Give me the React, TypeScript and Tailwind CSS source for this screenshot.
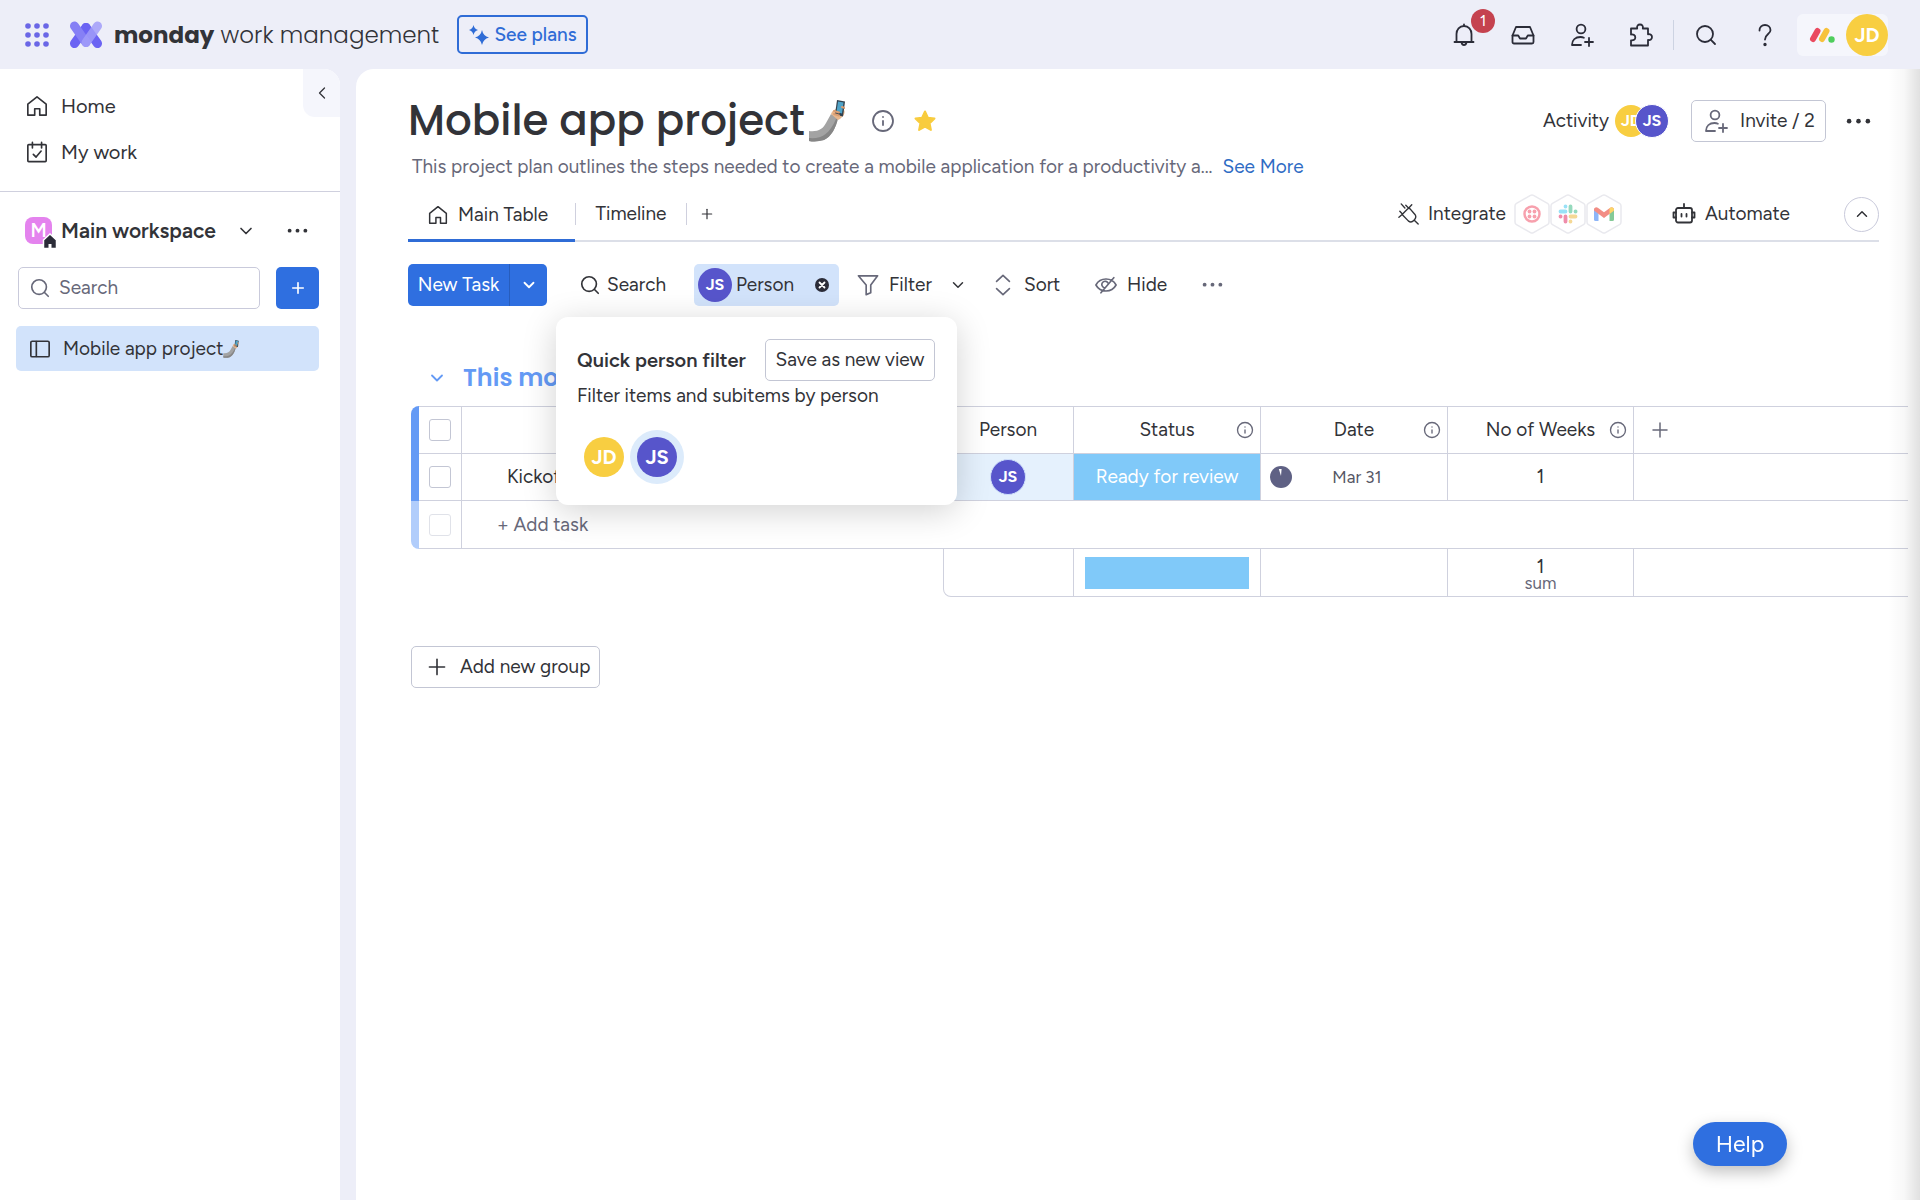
import React from "react";
import {
  ChevronDown,
  ChevronLeft,
  ChevronUp,
  Info,
  Plus,
  Search,
} from "lucide-react";

interface IconProps {
  children: React.ReactNode;
  className?: string;
}

const Icon: React.FC<IconProps> = ({ children, className = "size-6" }) => (
  <svg
    viewBox="0 0 24 24"
    fill="none"
    stroke="currentColor"
    strokeWidth="1.8"
    strokeLinecap="round"
    strokeLinejoin="round"
    aria-hidden="true"
    className={`shrink-0 ${className}`}
  >
    {children}
  </svg>
);

const HomeIcon = ({ className }: { className?: string }) => (
  <Icon className={className}>
    <path d="M2 10 12 2l10 8v12h-7v-7H9.500v7H2Z" />
  </Icon>
);

const MyWorkIcon = () => (
  <Icon className="size-[22px]">
    <rect x="2" y="4" width="20" height="18.500" rx="1" />
    <path d="M7 1.500v6M17 1.500v6M8 14.500l3 3 5.500-6.500" />
  </Icon>
);

const BoardIcon = () => (
  <Icon className="size-[22px]">
    <rect x="2" y="3.500" width="20" height="17" rx="1.500" />
    <path d="M8 4v16" />
  </Icon>
);

const PersonPlusIcon = ({ className }: { className?: string }) => (
  <Icon className={className}>
    <circle cx="11" cy="6" r="4.400" />
    <path d="M11 22H2c0-5 3.500-8 8.500-8 1.300 0 2.400.2 3.400.7M19 15v8M15 19h8" />
  </Icon>
);

const BellIcon = () => (
  <Icon>
    <path d="M12 1.500V3M4.500 19V11c0-4.500 3-8 7.500-8s7.500 3.500 7.500 8v8M2.500 19h19M9.500 19.500c.4 1.600 1.200 2.500 2.500 2.500s2.100-.9 2.500-2.500" />
  </Icon>
);

const InboxIcon = () => (
  <Icon>
    <path d="M5 4h14l3.500 8.500V19a1.500 1.500 0 0 1-1.500 1.500H3A1.500 1.500 0 0 1 1.500 19v-6.500Z" />
    <path d="M1.500 12.500h5.700l1.800 3h6l1.800-3h5.700" />
  </Icon>
);

const PuzzleIcon = () => (
  <Icon>
    <path d="M2 5.500h6.200C7.600 3 9 1.500 11 1.500S14.400 3 13.800 5.500H19v5.800c2.400-.6 4 .8 4 2.800s-1.600 3.400-4 2.800v5.600H2v-5.200c2.600.4 4.300-1 4.300-2.900S4.600 11.100 2 11.500Z" />
  </Icon>
);

const IntegratePlugIcon = () => (
  <Icon className="size-[22px]">
    <path
      strokeWidth="1.500"
      d="m2 9 3 3.200M8.500 2.500 12 6M4.500 12.500 12 5l6.500 7.500a4.500 4.500 0 0 1-.3 5.500l-1 1.200a4.500 4.500 0 0 1-6 .3Zm-1-11.500 4 4.500M15 2l-3 3.200M1 15.500l3.500-3M17.500 18.500 22 23"
    />
  </Icon>
);

const RobotIcon = () => (
  <Icon className="size-6">
    <rect x="4" y="6" width="16" height="14.500" rx="2" />
    <path d="M12 2v4M4 10.500H1.500v5H4M20 10.500h2.500v5H20M9.500 12v2.500M14.500 12v2.500" />
  </Icon>
);

const Dots = ({ className = "w-6" }: { className?: string }) => (
  <svg viewBox="0 0 24 6" fill="currentColor" aria-hidden="true" className={`shrink-0 ${className}`}>
    <circle cx="3" cy="3" r="2.200" />
    <circle cx="12" cy="3" r="2.200" />
    <circle cx="21" cy="3" r="2.200" />
  </svg>
);

const SelfieArm = ({ className }: { className?: string }) => (
  <svg viewBox="0 0 36 42" role="img" aria-label="selfie" className={`shrink-0 ${className}`}>
    <path d="M0 31c9 1 14-2 17-8l5-9 7 4c-2 10-7 19-14 22-5 1.500-10 2-15 1Z" fill="#a3a3a3" />
    <path d="M0 38c12 1 20-3 27-19l2-1c-2 10-7 19-14 22-5 1.500-10 2-15 1Z" fill="#868686" />
    <path d="M22 14c1-3 3-4 5-5l6-1c2 1 3 3 2.500 5-.5 3-3 4-4.500 6l-2 1Z" fill="#e8b68c" />
    <path d="m28 0 8 1.500-2 15-8-2Z" fill="#31414e" />
    <path d="m29 1.500 5.500 1-1.500 11-5.500-1.500Z" fill="#4fa3c7" />
    <path d="M25 11l5 1.500M25 14l5 1.500M33 7l3 1" stroke="#d99d72" strokeWidth="2" strokeLinecap="round" />
  </svg>
);

const WorkLogo = () => (
  <svg viewBox="0 0 32 28" aria-hidden="true" className="h-7 w-8 shrink-0">
    <g strokeWidth="9" strokeLinecap="round">
      <path d="M4.500 22.500 16 6.500" stroke="#6b63f3" />
      <path d="M16 6.500l11.500 16" stroke="#6b63f3" />
      <path d="M4.500 5l11.500 16.500" stroke="#8680f5" />
      <path d="M16 21.500 27.500 5" stroke="#a29dfa" opacity=".85" />
    </g>
  </svg>
);

const MondayLogo = () => (
  <svg viewBox="0 0 26 16" aria-hidden="true" className="h-4 w-[26px] shrink-0">
    <path d="M4 12 8.500 4" stroke="#ea4a5f" strokeWidth="6" strokeLinecap="round" />
    <path d="M13 12 17.500 4" stroke="#f7c23c" strokeWidth="6" strokeLinecap="round" />
    <circle cx="22.500" cy="12.500" r="3.200" fill="#4fce5d" />
  </svg>
);

const Hexagon: React.FC<{ children: React.ReactNode }> = ({ children }) => (
  <svg viewBox="0 0 36 40" fill="none" aria-hidden="true" className="h-10 w-9">
    <path
      d="M16.500 1.400a3 3 0 0 1 3 0l14 8a3 3 0 0 1 1.500 2.600v16a3 3 0 0 1-1.500 2.600l-14 8a3 3 0 0 1-3 0l-14-8A3 3 0 0 1 1 28V12a3 3 0 0 1 1.500-2.600Z"
      fill="#fff"
      stroke="#e9e9ee"
      strokeWidth="1.500"
    />
    {children}
  </svg>
);

interface AvatarProps {
  initials: string;
  className: string;
}

const Avatar: React.FC<AvatarProps> = ({ initials, className }) => (
  <span
    className={`flex shrink-0 items-center justify-center rounded-full font-bold text-white ${
      initials === "JS" ? "bg-[#5755cb]" : "bg-[#f8ce41]"
    } ${className}`}
  >
    {initials}
  </span>
);

const TopBar = () => (
  <header className="flex h-[69px] shrink-0 items-center justify-between pr-8 pl-6">
    <div className="flex items-center">
      <button aria-label="Products" className="mr-[21px]">
        <svg viewBox="0 0 25 24" fill="#6a66e6" aria-hidden="true" className="h-6 w-[25px]">
          {[3, 12, 21].map((y) =>
            [4, 13, 22].map((x) => <circle key={`${x}-${y}`} cx={x} cy={y} r="2.800" />),
          )}
        </svg>
      </button>
      <WorkLogo />
      <p className="ml-3 w-[343px] font-['Poppins','Figtree','Inter',sans-serif] text-[23px] leading-9 font-light whitespace-nowrap">
        <span className="font-bold">monday</span> work management
      </p>
      <button className="flex h-[39px] w-[131px] items-center justify-center gap-1 rounded-[5px] border-2 border-[#2f6cd6] text-[19px] font-medium text-[#2f6cd6]">
        <svg viewBox="0 0 22 22" fill="currentColor" aria-hidden="true" className="size-[22px]">
          <path d="M14 6q1.200 6 7 7.500-5.800 1.500-7 7.500-1.200-6-7-7.500Q12.800 12 14 6Z" />
          <path d="M5.500 1q.8 4 4.500 5-3.700 1-4.500 5-.8-4-4.500-5 3.700-1 4.500-5Z" />
        </svg>
        See plans
      </button>
    </div>
    <div className="flex items-center text-[#2b2c38]">
      <div className="flex items-center gap-[35px]">
        <button aria-label="Notifications" className="relative">
          <BellIcon />
          <span className="absolute -top-3.5 left-[19px] flex size-6 items-center justify-center rounded-full bg-[#c5424f] text-base text-white">
            1
          </span>
        </button>
        <button aria-label="Inbox">
          <InboxIcon />
        </button>
        <button aria-label="Invite members">
          <PersonPlusIcon />
        </button>
        <button aria-label="Apps">
          <PuzzleIcon />
        </button>
      </div>
      <div className="ml-5 h-[30px] w-px bg-[#cdd3e2]" />
      <button aria-label="Search everything" className="ml-5">
        <Search className="size-6" strokeWidth={1.8} />
      </button>
      <button aria-label="Help center" className="ml-[35px]">
        <Icon>
          <path d="M6.500 7.500C6.500 4 9 2 12 2s5.500 2 5.500 5.200c0 3.800-5.500 4-5.500 9.300" />
          <circle cx="12" cy="21.500" r=".8" fill="currentColor" />
        </Icon>
      </button>
      <button aria-label="Account" className="ml-5 flex items-center rounded-md bg-[#f5f6fc] pl-3">
        <MondayLogo />
        <Avatar initials="JD" className="ml-[11px] size-[42px] text-xl" />
      </button>
    </div>
  </header>
);

const Sidebar = () => (
  <aside className="relative w-[340px] shrink-0 rounded-tr-2xl bg-white">
    <button
      aria-label="Collapse sidebar"
      className="absolute top-0 right-0 flex h-12 w-[37px] items-center justify-center rounded-tr-2xl rounded-bl-xl bg-[#f5f6fc]"
    >
      <ChevronLeft className="size-5" strokeWidth={1.5} />
    </button>
    <nav className="flex h-[123px] flex-col gap-4 border-b border-[#cfd0de] pt-[22px] pl-[26px] text-xl">
      <a href="#home" className="flex h-[30px] items-center gap-[13px]">
        <HomeIcon className="size-[22px]" />
        Home
      </a>
      <a href="#work" className="flex h-[30px] items-center gap-[13px]">
        <MyWorkIcon />
        My work
      </a>
    </nav>
    <div className="flex h-[75px] items-center pt-0.5 pl-[25px]">
      <span className="relative flex size-[27px] items-center justify-center rounded-lg bg-[#e483ee] text-[19px] font-semibold text-white">
        M
        <svg viewBox="0 0 16 16" aria-hidden="true" className="absolute top-4 left-[17px] size-4">
          <path d="M8 1 1.500 7v8.500h13V7Z" fill="#2b2c38" stroke="#fff" strokeWidth="1.500" />
          <path d="M6.500 11h3v5h-3Z" fill="#fff" />
        </svg>
      </span>
      <button className="ml-[9px] flex items-center text-[21px] font-semibold">
        <span className="w-[175px] text-left whitespace-nowrap">Main workspace</span>
        <ChevronDown className="size-5" strokeWidth={2} />
      </button>
      <button aria-label="Workspace options" className="ml-[31px]">
        <Dots className="w-[21px]" />
      </button>
    </div>
    <div className="flex gap-4 pl-[18px]">
      <label className="flex h-[42px] w-[242px] items-center gap-2 rounded-[5px] border border-[#c9cadb] pl-2.5 text-[#676879]">
        <Search className="size-[22px] shrink-0" strokeWidth={1.8} />
        <input
          placeholder="Search"
          aria-label="Search workspace"
          className="w-full min-w-0 text-[19px] outline-none placeholder:text-[#676879]"
        />
      </label>
      <button
        aria-label="Add item"
        className="flex h-[42px] w-[43px] items-center justify-center rounded-[5px] bg-[#2f6fe0] text-white"
      >
        <Plus className="size-[18px]" strokeWidth={2.2} />
      </button>
    </div>
    <a
      href="#board"
      className="mt-[17px] mr-[21px] ml-4 flex h-[45px] items-center rounded-[5px] bg-[#d2e3fb] pl-[13px] text-[19px]"
    >
      <BoardIcon />
      <span className="ml-3">Mobile app project</span>
      <SelfieArm className="h-[18px] w-4" />
    </a>
  </aside>
);

const BoardHeader = () => (
  <div className="pr-[41px] pl-[52px]">
    <div className="flex h-[42px] items-center">
      <h1 className="font-['Poppins','Figtree','Inter',sans-serif] text-[42px] leading-[42px] font-medium whitespace-nowrap">
        Mobile app project
      </h1>
      <SelfieArm className="ml-1 h-[42px] w-9" />
      <button aria-label="Board info" className="ml-[26px] text-[#676879]">
        <Info className="size-6" strokeWidth={1.8} />
      </button>
      <button aria-label="Remove from favorites" className="ml-[18px]">
        <svg viewBox="0 0 24 24" fill="#f8cc3e" stroke="#f8cc3e" strokeWidth="2" strokeLinejoin="round" aria-hidden="true" className="size-6">
          <path d="m12 2.500 2.900 6.200 6.600.8-4.900 4.700 1.300 6.800-5.900-3.400L6.100 21l1.300-6.800L2.500 9.500l6.600-.8Z" />
        </svg>
      </button>
      <button className="ml-auto flex items-center text-[19px]">
        Activity
        <Avatar initials="JD" className="ml-1.5 size-8 text-base" />
        <Avatar initials="JS" className="-ml-3 size-[34px] border border-white text-base" />
      </button>
      <button className="ml-[22px] flex h-[42px] w-[135px] items-center gap-3 rounded-[5px] border border-[#c3c6d4] pl-3 text-[19px] whitespace-nowrap">
        <PersonPlusIcon className="size-6 text-[#676879]" />
        Invite / 2
      </button>
      <button aria-label="Board options" className="mr-2 ml-5">
        <Dots className="w-[25px]" />
      </button>
    </div>
    <div className="mt-3 flex h-[26px] items-center pl-1 text-[19px] whitespace-nowrap">
      <p className="text-[#676879]">
        This project plan outlines the steps needed to create a mobile application for a productivity a...
      </p>
      <a href="#more" className="ml-2.5 text-[#2f6cc4]">
        See More
      </a>
    </div>
    <div className="mt-2 flex h-[54px] items-stretch border-b-2 border-[#dcdfe8] text-[19px]">
      <button className="-mb-0.5 flex w-[167px] items-center gap-2.5 border-b-3 border-[#2f6cd6] pt-0.5 pl-5">
        <HomeIcon className="size-5" />
        Main Table
      </button>
      <span className="h-[22px] w-px self-center bg-[#cfd0de]" />
      <button className="w-[110px]">Timeline</button>
      <span className="h-[22px] w-px self-center bg-[#cfd0de]" />
      <button aria-label="Add view" className="ml-3">
        <Plus className="size-4" strokeWidth={1.8} />
      </button>
      <button className="ml-auto flex items-center">
        <IntegratePlugIcon />
        <span className="mr-2 ml-2">Integrate</span>
        <Hexagon>
          <g opacity=".55">
            <circle cx="18" cy="20" r="7.500" stroke="#f2546b" strokeWidth="2.500" />
            <g fill="#f2546b">
              <circle cx="15.500" cy="17.500" r="1.900" />
              <circle cx="20.500" cy="17.500" r="1.900" />
              <circle cx="15.500" cy="22.500" r="1.900" />
              <circle cx="20.500" cy="22.500" r="1.900" />
            </g>
          </g>
        </Hexagon>
        <Hexagon>
          <g opacity=".5" strokeWidth="3.800" strokeLinecap="round">
            <path d="M10.500 17.500h5M15.500 12.500v.1" stroke="#36c5f0" />
            <path d="M20.500 12.500v5M25.500 17.500h.1" stroke="#2eb67d" />
            <path d="M20.500 22.500h5M20.500 27.500v.1" stroke="#ecb22e" />
            <path d="M15.500 22.500v5M10.500 22.500h.1" stroke="#e01e5a" />
          </g>
        </Hexagon>
        <Hexagon>
          <g opacity=".6">
            <path d="M8 14.500 12.500 18v9H9.500A1.500 1.500 0 0 1 8 25.500Z" fill="#4285f4" />
            <path d="M28 14.500 23.500 18v9h3a1.500 1.500 0 0 0 1.500-1.500Z" fill="#34a853" />
            <path d="M8 15.500c0-2 2.300-3 3.800-1.800L18 18.300l6.200-4.600c1.500-1.200 3.800-.2 3.800 1.800v1L18 24 8 16.500Z" fill="#ea4335" />
            <path d="M23.500 14.200l.7-.5c1.500-1.200 3.800-.2 3.800 1.800v1l-4.500 3.400Z" fill="#fbbc04" />
          </g>
        </Hexagon>
      </button>
      <button className="ml-[50px] flex w-[118px] items-center gap-[9px]">
        <RobotIcon />
        Automate
      </button>
      <button
        aria-label="Collapse header"
        className="ml-[54px] flex size-[35px] items-center justify-center self-center rounded-full border border-[#c9cadb]"
      >
        <ChevronUp className="size-[18px]" strokeWidth={2} />
      </button>
    </div>
  </div>
);

const PersonFilter = () => (
  <div className="absolute top-[53px] -left-[138px] z-10 h-[188px] w-[401px] rounded-xl bg-white pt-[22px] pr-[22px] pl-[21px] shadow-[0_6px_34px_rgba(0,0,0,0.18)]">
    <div className="flex items-center justify-between">
      <h3 className="text-[20px] font-semibold whitespace-nowrap">Quick person filter</h3>
      <button className="h-[42px] w-[170px] rounded-[5px] border border-[#c3c6d4] whitespace-nowrap">
        Save as new view
      </button>
    </div>
    <p className="pt-px whitespace-nowrap">Filter items and subitems by person</p>
    <div className="mt-5 flex items-center pl-[7px]">
      <button aria-label="JD">
        <Avatar initials="JD" className="size-10 text-xl" />
      </button>
      <button aria-label="JS" aria-pressed="true" className="ml-1.5 rounded-full bg-[#dcebfb] p-[7px]">
        <Avatar initials="JS" className="size-10 text-xl" />
      </button>
    </div>
  </div>
);

const Toolbar = () => (
  <div className="mt-[22px] flex h-[42px] items-stretch pl-[52px] text-[19px]">
    <div className="flex w-[139px] overflow-hidden rounded-[5px] bg-[#2f6fe0] text-white">
      <button className="w-[102px] border-r border-[#275dbd] whitespace-nowrap">New Task</button>
      <button aria-label="More item types" className="flex flex-1 items-center justify-center">
        <ChevronDown className="size-[18px]" strokeWidth={2.4} />
      </button>
    </div>
    <button className="flex w-[147px] items-center gap-1.5 pl-8">
      <Search className="size-[22px]" strokeWidth={1.8} />
      Search
    </button>
    <div className="relative flex w-[145px] items-center rounded-[5px] bg-[#d2e3fb] pl-1">
      <button aria-expanded="true" className="flex items-center gap-1">
        <Avatar initials="JS" className="size-[34px] text-base" />
        Person
      </button>
      <button aria-label="Clear person filter" className="mr-2.5 ml-auto">
        <svg viewBox="0 0 14 14" aria-hidden="true" className="size-3.5">
          <circle cx="7" cy="7" r="7" fill="#2b2c38" />
          <path d="m4.500 4.500 5 5m0-5-5 5" stroke="#fff" strokeWidth="1.800" strokeLinecap="round" />
        </svg>
      </button>
      <PersonFilter />
    </div>
    <button className="flex w-[130px] items-center gap-2.5 pl-[18px]">
      <Icon className="size-[22px] text-[#676879]">
        <path d="M1.500 2h21l-7.500 10v8.500l-5 2V12Z" />
      </Icon>
      <span className="w-[50px] text-left">Filter</span>
      <ChevronDown className="size-[18px]" strokeWidth={2} />
    </button>
    <button className="flex w-[126px] items-center gap-2.5 pl-[23px]">
      <Icon className="size-[22px] text-[#676879]">
        <path d="m5 8 7-6.500L19 8M5 16l7 6.500 7-6.500" />
      </Icon>
      Sort
    </button>
    <button className="flex w-[107px] items-center gap-2.5">
      <Icon className="size-[22px] text-[#676879]">
        <path d="M1 12c2.500-4.500 6.500-6.500 11-6.500s8.500 2 11 6.500c-2.500 4.500-6.500 6.500-11 6.500S3.500 16.500 1 12ZM20.500 4l-14 16.500M14.500 10.500A3.600 3.600 0 1 0 10 15" />
      </Icon>
      Hide
    </button>
    <button aria-label="More actions" className="text-[#676879]">
      <Dots className="w-[21px]" />
    </button>
  </div>
);

const checkbox =
  "block size-[22px] mx-auto appearance-none rounded-[3px] border border-[#c3c6d4] bg-white";
const cell = "border-r border-b border-[#cfd1de] p-0";

interface ColumnHeadProps {
  title: string;
  info?: boolean;
}

const ColumnHead: React.FC<ColumnHeadProps> = ({ title, info }) => (
  <th className={`relative border-t font-normal whitespace-nowrap ${cell}`}>
    {title}
    {info && (
      <button aria-label={`${title} info`} className="absolute top-3.5 right-1.5 text-[#676879]">
        <Info className="size-[18px]" strokeWidth={1.8} />
      </button>
    )}
  </th>
);

const TaskTable = () => (
  <table className="mt-2 w-full table-fixed border-separate border-spacing-0 text-[19px]">
    <colgroup>
      <col className="w-2" />
      <col className="w-[43px]" />
      <col className="w-[481px]" />
      <col className="w-[131px]" />
      <col className="w-[187px]" />
      <col className="w-[187px]" />
      <col className="w-[186px]" />
      <col />
    </colgroup>
    <thead>
      <tr className="h-12">
        <td className="rounded-tl-lg bg-[#649af5] p-0" />
        <th className={`border-t ${cell}`}>
          <input type="checkbox" aria-label="Select all" className={checkbox} />
        </th>
        <ColumnHead title="Task" />
        <ColumnHead title="Person" />
        <ColumnHead title="Status" info />
        <ColumnHead title="Date" info />
        <ColumnHead title="No of Weeks" info />
        <th className="border-t border-b border-[#cfd1de] p-0 pl-3.5 text-left">
          <button aria-label="Add column" className="block text-[#676879]">
            <Plus className="size-6" strokeWidth={1.5} />
          </button>
        </th>
      </tr>
    </thead>
    <tbody>
      <tr className="h-[47px]">
        <td className="bg-[#649af5] p-0" />
        <td className={cell}>
          <input type="checkbox" aria-label="Select Kickoff" className={checkbox} />
        </td>
        <td className={`${cell} pl-[45px]!`}>Kickoff</td>
        <td className={`${cell} bg-[#e5f1fd]`}>
          <Avatar initials="JS" className="mx-auto size-9 border border-[#cfe0fb] text-base" />
        </td>
        <td className={`${cell} bg-[#80c9f9] text-center text-white`}>Ready for review</td>
        <td className={cell}>
          <div className="flex items-center pl-[9px]">
            <svg viewBox="0 0 22 22" aria-label="Timeline progress" className="size-[22px]">
              <circle cx="11" cy="11" r="11" fill="#5f6184" />
              <path d="M11 10 8.800 3h2.800Z" fill="#fff" />
            </svg>
            <span className="w-[130px] text-center text-[17px] text-[#555665]">Mar 31</span>
          </div>
        </td>
        <td className={`${cell} text-center`}>1</td>
        <td className="border-b border-[#cfd1de] p-0" />
      </tr>
      <tr className="h-12">
        <td className="rounded-bl-lg bg-[#b1cdfb] p-0" />
        <td className={cell}>
          <input
            type="checkbox"
            disabled
            aria-label="Select new task"
            className={`${checkbox} opacity-50`}
          />
        </td>
        <td colSpan={6} className="border-b border-[#cfd1de] p-0 pl-[35px]">
          <button className="text-[#676879]">+ Add task</button>
        </td>
      </tr>
    </tbody>
    <tfoot>
      <tr className="h-12">
        <td colSpan={3} className="p-0" />
        <td className={`${cell} rounded-bl-lg border-l`} />
        <td className={cell}>
          <div className="mx-auto h-8 w-[164px] bg-[#80c9f9]" />
        </td>
        <td className={cell} />
        <td className={`${cell} text-center`}>
          <div className="pt-1 leading-4">1</div>
          <div className="text-[17px] leading-4 text-[#676879]">sum</div>
        </td>
        <td className="border-b border-[#cfd1de] p-0" />
      </tr>
    </tfoot>
  </table>
);

const Board = () => (
  <main className="relative min-w-0 flex-1 overflow-hidden rounded-tl-[18px] bg-white pt-[31px]">
    <BoardHeader />
    <Toolbar />
    <section className="mt-[52px] pr-3 pl-[55px]">
      <div className="flex h-10 items-center pl-4 text-[#649af5]">
        <button aria-label="Collapse group">
          <ChevronDown className="size-5" strokeWidth={2.2} />
        </button>
        <h2 className="ml-4 font-['Poppins','Figtree','Inter',sans-serif] text-2xl font-semibold">
          This month
        </h2>
      </div>
      <TaskTable />
      <button className="mt-[49px] flex h-[42px] w-[189px] items-center gap-2.5 rounded-[5px] border border-[#c3c6d4] pl-3 text-[19px] whitespace-nowrap">
        <Plus className="size-[26px]" strokeWidth={1.5} />
        Add new group
      </button>
    </section>
    <div className="pointer-events-none absolute inset-y-0 right-0 w-8 bg-linear-to-l from-black/12 via-black/3 to-transparent" />
  </main>
);

export default function App() {
  return (
    <div className="flex min-h-screen flex-col bg-[#edeef8] font-['Figtree','Inter',sans-serif] leading-7 text-[#323338]">
      <TopBar />
      <div className="flex flex-1 gap-4">
        <Sidebar />
        <Board />
      </div>
      <button className="fixed right-[133px] bottom-[34px] h-11 w-[94px] rounded-full bg-[#2f6fe0] text-[23px] text-white shadow-[0_6px_16px_rgba(0,0,0,0.25)]">
        Help
      </button>
    </div>
  );
}
